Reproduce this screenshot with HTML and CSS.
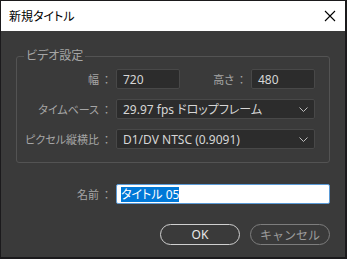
FILE: index.html
```html
<!DOCTYPE html>
<html lang="ja">
<head>
    <meta charset="UTF-8">
    <meta name="viewport" content="width=device-width, initial-scale=1.0">
    <title>新規タイトル</title>
    <link rel="stylesheet" href="styles.css">
</head>
<body>
    <div class="dialog">
        <!-- Title Bar -->
        <div class="titlebar">
            <span class="title">新規タイトル</span>
            <svg class="close" width="12" height="12" viewBox="0 0 12 12">
                <path d="M1 1 L11 11 M11 1 L1 11" stroke="#000" stroke-width="1.1" fill="none"/>
            </svg>
        </div>

        <div class="content">
            <!-- Video Settings -->
            <fieldset class="group">
                <legend>ビデオ設定</legend>

                <div class="row">
                    <label class="lbl">幅<span class="colon">：</span></label>
                    <div class="pair">
                        <div class="field small">720</div>
                        <label class="lbl inline">高さ<span class="colon">：</span></label>
                        <div class="field small">480</div>
                    </div>
                </div>

                <div class="row">
                    <label class="lbl">タイムベース<span class="colon">：</span></label>
                    <div class="field select">
                        <span>29.97 fps ドロップフレーム</span>
                        <svg class="chev" width="9" height="5" viewBox="0 0 9 5"><path d="M0.5 0.5 L4.5 4.5 L8.5 0.5" stroke="#bdbdbd" fill="none"/></svg>
                    </div>
                </div>

                <div class="row">
                    <label class="lbl">ピクセル縦横比<span class="colon">：</span></label>
                    <div class="field select">
                        <span>D1/DV NTSC (0.9091)</span>
                        <svg class="chev" width="9" height="5" viewBox="0 0 9 5"><path d="M0.5 0.5 L4.5 4.5 L8.5 0.5" stroke="#bdbdbd" fill="none"/></svg>
                    </div>
                </div>
            </fieldset>

            <!-- Name -->
            <div class="row name-row">
                <label class="lbl">名前<span class="colon">：</span></label>
                <div class="field name"><span class="sel">タイトル 05</span></div>
            </div>

            <!-- Buttons -->
            <div class="buttons">
                <button class="btn ok">OK</button>
                <button class="btn cancel">キャンセル</button>
            </div>
        </div>
    </div>
</body>
</html>
```

FILE: styles.css
```css
/* General */
* {
    margin: 0;
    padding: 0;
    box-sizing: border-box;
}

body {
    background: #1b1a1c;
    font-family: "Noto Sans", "Noto Sans CJK JP", sans-serif;
    font-feature-settings: "palt";
    padding: 1px 2px 2px 1px;
}

/* Dialog */
.dialog {
    width: 344px;
    height: 256px;
    background: #3a3a3a;
}

.titlebar {
    height: 30px;
    background: #fff;
    display: flex;
    align-items: center;
    justify-content: space-between;
    padding: 0 9px 0 8px;
}

.title {
    font-size: 12px;
    color: #000;
}

.content {
    padding: 17px 15px 14px 15px;
}

/* Group box */
.group {
    border: 1px solid #535353;
    border-radius: 3px;
    padding: 5px 14px 13px 0;
    display: flex;
    flex-direction: column;
    gap: 10px;
    min-inline-size: 0;
}

.group legend {
    margin-left: 7px;
    padding: 0 2px;
    font-size: 12px;
    line-height: 16px;
    color: #a6a6a6;
}

/* Rows */
.row {
    display: grid;
    grid-template-columns: 95px 1fr;
    column-gap: 4px;
    align-items: center;
    height: 20px;
}

.lbl {
    text-align: right;
    font-size: 11px;
    color: #a6a6a6;
    white-space: nowrap;
}

.colon {
    font-feature-settings: normal;
    margin-left: 2px;
}

.pair {
    display: flex;
    align-items: center;
}

.lbl.inline {
    flex: 1;
    padding-right: 4px;
}

.field {
    height: 20px;
    background: #2c2c2c;
    border: 1px solid #484848;
    border-radius: 2px;
    padding: 0 6px;
    font-size: 12px;
    color: #d6d6d6;
    display: flex;
    align-items: center;
}

.field.small {
    width: 64px;
}

.select {
    justify-content: space-between;
    padding-right: 6px;
}

.chev {
    display: block;
}

/* Name */
.name-row {
    margin-top: 21px;
    grid-template-columns: 96px 1fr;
}

.field.name {
    background: #fff;
    border: 1px solid #5a9ad6;
    padding: 0 4px;
    color: #000;
}

.sel {
    background: #0078d7;
    color: #fff;
    line-height: 15px;
}

/* Buttons */
.buttons {
    margin-top: 20px;
    display: flex;
    justify-content: flex-end;
    gap: 10px;
}

.btn {
    width: 80px;
    height: 21px;
    border-radius: 11px;
    background: transparent;
    font-family: inherit;
    font-size: 12px;
}

.ok {
    border: 1px solid #cfcfcf;
    color: #e8e8e8;
}

.cancel {
    border: 1px solid #7d7d7d;
    color: #9c9c9c;
}
```
